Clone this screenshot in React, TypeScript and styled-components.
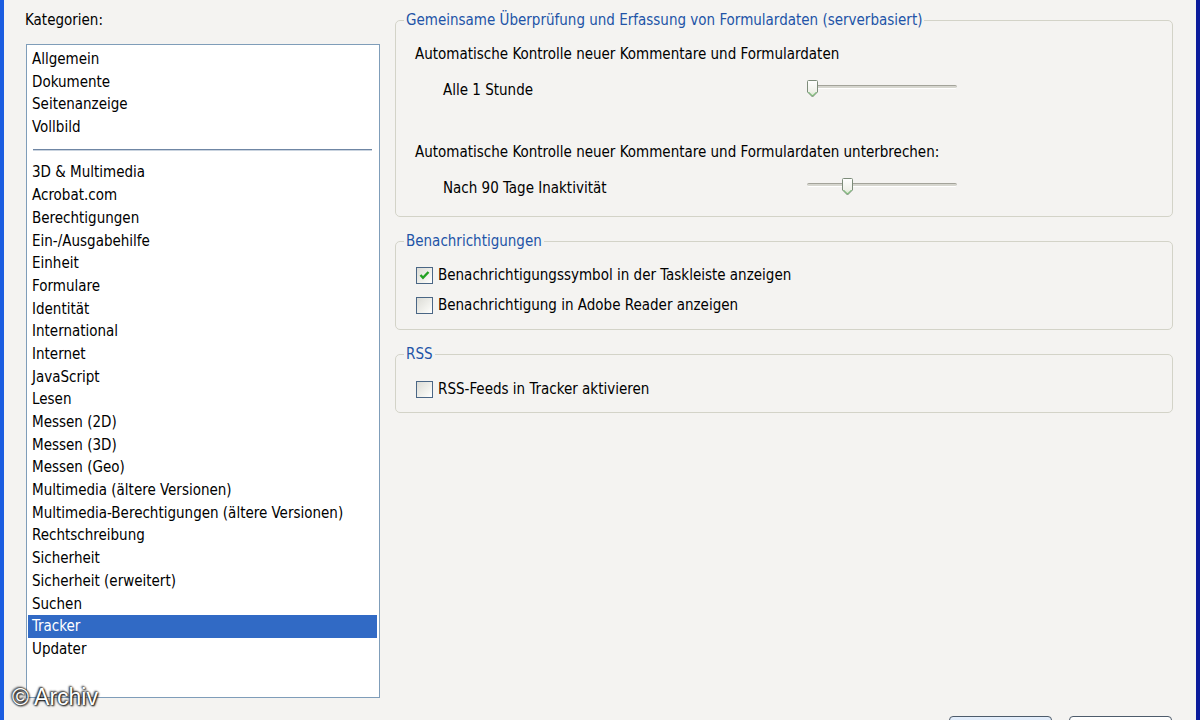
import React from "react";
import styled, {createGlobalStyle} from "styled-components";

const GlobalStyle = createGlobalStyle`
  html, body {
    margin: 0;
    padding: 0;
  }
  body {
    font-family: "DejaVu Sans Condensed", "Liberation Sans", Arial, sans-serif;
    font-size: 15px;
    color: #000;
  }
`;

const Window = styled.div`
  position: relative;
  display: flex;
  flex-direction: column;
  width: 1200px;
  height: 720px;
  box-sizing: border-box;
  overflow: hidden;
  background-color: #f4f3f1;
  border-left: 4px solid #1a5ce0;
  border-right: 4px solid #0b1c9c;
`;

const Main = styled.div`
  flex: none;
  display: flex;
  gap: 15px;
  padding: 10px 23px 0 22px;
  height: 698px;
  box-sizing: border-box;
`;

const Sidebar = styled.div`
  width: 354px;
  flex: none;
  display: flex;
  flex-direction: column;
`;

const Label = styled.div`
  line-height: 20px;
  margin-left: -1px;
`;

const ListBox = styled.div`
  margin-top: 14px;
  flex: 1;
  background-color: #fff;
  border: 1px solid #7f9db9;
  padding: 3px 2px 0 1px;
  overflow: hidden;
`;

const ListItem = styled.div<{ selected?: boolean }>`
  height: 22.7px;
  line-height: 22.7px;
  padding-left: 4px;
  white-space: nowrap;
  background-color: ${p => p.selected ? "#316ac5" : "transparent"};
  color: ${p => p.selected ? "#fff" : "#000"};
`;

const Separator = styled.div`
  height: 22.7px;
  display: flex;
  align-items: center;
  padding: 0 5px 0 5px;

  &::after {
    content: "";
    flex: 1;
    height: 1px;
    background-color: #6f86a4;
    border-bottom: 1px solid #c9d3df;
  }
`;

const Content = styled.div`
  flex: 1;
  display: flex;
  flex-direction: column;
  gap: 14px;
`;

const Group = styled.fieldset<{ inset: number; bottom: number; top: number }>`
  margin: 0;
  min-width: 0;
  border: 1px solid #d3d3c8;
  border-radius: 5px;
  padding: ${p => p.top}px 0 ${p => p.bottom}px ${p => p.inset}px;

  legend {
    margin-left: ${p => 8 - p.inset}px;
    padding: 0 2px;
    line-height: 20px;
    color: #2253a7;
  }
`;

const GroupText = styled.div<{ gap: number }>`
  margin-top: ${p => p.gap}px;
  line-height: 20px;
`;

const SliderRow = styled.div`
  margin-top: 16px;
  height: 20px;
  display: grid;
  grid-template-columns: 364px 150px;
  align-items: center;
  padding-left: 28px;
`;

const Track = styled.div`
  position: relative;
  height: 2px;
  margin-bottom: 6px;
  border-top: 1px solid #a3a39a;
  border-bottom: 1px solid #fff;
  background-color: #d6d6cf;
  border-radius: 2px;
`;

const Thumb = styled.svg`
  position: absolute;
  top: -6px;
`;

const CheckRow = styled.label`
  height: 30px;
  display: flex;
  align-items: center;
  gap: 5px;
  padding-top: 2px;
  box-sizing: border-box;
`;

const Box = styled.span`
  width: 15px;
  height: 15px;
  border: 1px solid #4a6685;
  background: linear-gradient(135deg, #dcdcd6 0%, #f4f4f0 70%, #fff 100%);
  display: flex;
  align-items: center;
  justify-content: center;
`;

const Footer = styled.div`
  display: flex;
  justify-content: flex-end;
  gap: 17px;
  padding: 18px 24px 0 0;
`;

const Button = styled.div<{ primary?: boolean }>`
  width: 103px;
  height: 23px;
  flex: none;
  box-sizing: border-box;
  border: 1px solid #4d5b6b;
  border-radius: 4px;
  background: ${p => p.primary
    ? "linear-gradient(#e4eefb, #c6d9f3)"
    : "linear-gradient(#ffffff, #ecebe6)"};
`;

const Watermark = styled.div`
  position: absolute;
  left: 8px;
  top: 684px;
  font-family: "Liberation Sans", Arial, sans-serif;
  font-size: 23px;
  color: #fff;
  text-shadow: 0 0 2px #000, 1px 1px 2px #000, -1px -1px 2px #333;
`;

const Slider = ({offset}: { offset: number }) => (
    <Track>
        <Thumb width="11" height="18" viewBox="0 0 11 18" style={{left: offset}}>
            <defs>
                <linearGradient id={"thumbFill"} x1="0" y1="0" x2="0" y2="1">
                    <stop offset="0" stopColor="#ffffff"/>
                    <stop offset="0.7" stopColor="#eef0e8"/>
                    <stop offset="1" stopColor="#c9dcb8"/>
                </linearGradient>
            </defs>
            <path d="M0.5 1.5 Q0.5 0.5 1.5 0.5 H9.5 Q10.5 0.5 10.5 1.5 V12 L5.5 17 L0.5 12 Z"
                  fill="url(#thumbFill)" stroke="#7d8c7a" strokeWidth="1"/>
            <path d="M1.5 12 L5.5 16 L9.5 12" fill="none" stroke="#63b263" strokeWidth="1"/>
        </Thumb>
    </Track>
);

const Checkbox = ({checked, label}: { checked?: boolean; label: string }) => (
    <CheckRow>
        <Box>
            {checked &&
                <svg width="11" height="11" viewBox="0 0 11 11">
                    <path d="M1.5 5 L4 7.8 L9.5 2" fill="none" stroke="#21a121" strokeWidth="2.4"/>
                </svg>
            }
        </Box>
        {label}
    </CheckRow>
);

const topCategories = ["Allgemein", "Dokumente", "Seitenanzeige", "Vollbild"];

const categories = [
    "3D & Multimedia",
    "Acrobat.com",
    "Berechtigungen",
    "Ein-/Ausgabehilfe",
    "Einheit",
    "Formulare",
    "Identität",
    "International",
    "Internet",
    "JavaScript",
    "Lesen",
    "Messen (2D)",
    "Messen (3D)",
    "Messen (Geo)",
    "Multimedia (ältere Versionen)",
    "Multimedia-Berechtigungen (ältere Versionen)",
    "Rechtschreibung",
    "Sicherheit",
    "Sicherheit (erweitert)",
    "Suchen",
    "Tracker",
    "Updater",
];

const App = () => {
    const selected = "Tracker";

    return (
        <>
            <GlobalStyle/>
            <Window>
                <Main>
                    <Sidebar>
                        <Label>Kategorien:</Label>
                        <ListBox>
                            {topCategories.map(c => <ListItem key={c}>{c}</ListItem>)}
                            <Separator/>
                            {categories.map(c => (
                                <ListItem key={c} selected={c === selected}>{c}</ListItem>
                            ))}
                        </ListBox>
                    </Sidebar>
                    <Content>
                        <Group inset={19} top={0} bottom={18}>
                            <legend>Gemeinsame Überprüfung und Erfassung von Formulardaten (serverbasiert)</legend>
                            <GroupText gap={14}>Automatische Kontrolle neuer Kommentare und Formulardaten</GroupText>
                            <SliderRow>
                                <span>Alle 1 Stunde</span>
                                <Slider offset={0}/>
                            </SliderRow>
                            <GroupText gap={42}>Automatische Kontrolle neuer Kommentare und Formulardaten unterbrechen:</GroupText>
                            <SliderRow>
                                <span>Nach 90 Tage Inaktivität</span>
                                <Slider offset={35}/>
                            </SliderRow>
                        </Group>
                        <Group inset={20} top={8} bottom={10}>
                            <legend>Benachrichtigungen</legend>
                            <Checkbox checked label={"Benachrichtigungssymbol in der Taskleiste anzeigen"}/>
                            <Checkbox label={"Benachrichtigung in Adobe Reader anzeigen"}/>
                        </Group>
                        <Group inset={20} top={9} bottom={9}>
                            <legend>RSS</legend>
                            <Checkbox label={"RSS-Feeds in Tracker aktivieren"}/>
                        </Group>
                    </Content>
                </Main>
                <Footer>
                    <Button primary/>
                    <Button/>
                </Footer>
                <Watermark>© Archiv</Watermark>
            </Window>
        </>
    );
};

export default App;
